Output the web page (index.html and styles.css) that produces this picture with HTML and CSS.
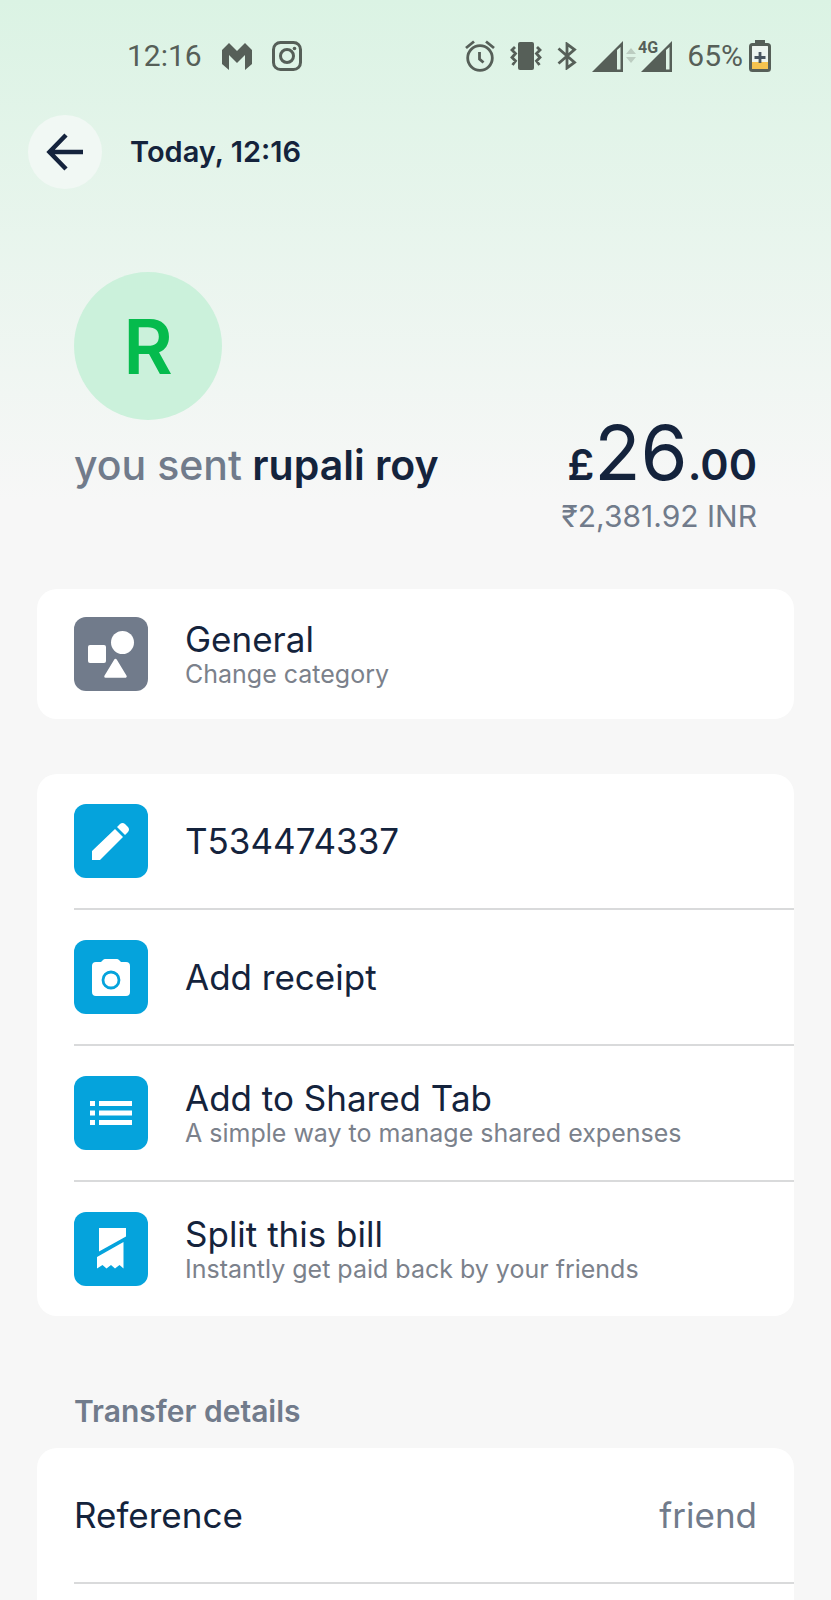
FILE: index.html
```html
<!DOCTYPE html>
<html lang="en">
<head>
<meta charset="utf-8">
<meta name="viewport" content="width=device-width, initial-scale=1">
<title>Transaction</title>
<link rel="stylesheet" href="styles.css">
</head>
<body>
<div class="screen">
  <div class="status">
    <span class="status-text">12:16</span>
    <svg class="status-mail" width="30" height="27" viewBox="0 0 30 27" aria-hidden="true"><path fill="#565f58" d="M7 0l8 8 8-8 7 7v14l-7 6V12l-8 8-8-8v15l-7-6V7z"/></svg>
    <svg width="30" height="30" viewBox="0 0 30 30" fill="none" stroke="#565f58" stroke-width="3" aria-hidden="true"><rect x="1.5" y="1.5" width="27" height="27" rx="7"/><circle cx="15" cy="15" r="6.5"/><circle cx="22.5" cy="7.5" r="1.8" fill="#565f58" stroke="none"/></svg>
    <div class="status-right">
      <svg width="30" height="32" viewBox="0 0 30 32" fill="none" stroke="#565f58" stroke-width="2.8" aria-hidden="true"><circle cx="15" cy="18" r="12.3"/><path d="M1 8l8-6.500M29 8l-8-6.500M14.500 12v7l4 3.500"/></svg>
      <svg width="32" height="28" viewBox="0 0 32 28" aria-hidden="true"><rect x="8" y="0" width="16" height="28" rx="2" fill="#565f58"/><path fill="none" stroke="#565f58" stroke-width="2.800" d="M5 5l-3 3 3.500 3.500-3.500 4 3.500 3.500-3 4M27 5l3 3-3.500 3.500 3.500 4-3.500 3.500 3 4"/></svg>
      <svg width="20" height="28" viewBox="0 0 20 28" fill="none" stroke="#565f58" stroke-width="2.800" aria-hidden="true"><path d="M1.500 6.500l16 14L10 26V2l7.500 5.500-16 14"/></svg>
      <svg width="80" height="34" viewBox="0 0 80 34" aria-hidden="true"><g fill="#565f58"><path fill-rule="evenodd" d="M31 2v31H0zM25 11v19.500h3.500V8z"/><path fill-rule="evenodd" d="M80 2v31H49zM74 11v19.500h3.500V8z"/></g><path fill="#bccdc1" d="M39 9l5 6H34zM34 18h10l-5 6z"/><text class="net" x="46" y="14">4G</text></svg>
      <span class="status-text">65%</span>
      <svg width="22" height="32" viewBox="0 0 22 32" aria-hidden="true"><path fill="#565f58" d="M6 0h10v4H6z"/><rect x="1.500" y="4.500" width="19" height="26" rx="2" fill="#eef6f0" stroke="#565f58" stroke-width="3"/><path fill="#f5c34f" d="M3 22h16v7H3z"/><path stroke="#4a5660" stroke-width="2.800" d="M11 12v11M5.500 17.500h11"/></svg>
    </div>
  </div>

  <header class="topbar">
    <button class="back" type="button" aria-label="Back">
      <svg width="38" height="38" viewBox="0 0 38 38" fill="none" stroke="#14233c" stroke-width="4.500" aria-hidden="true"><path d="M20 2L3.500 19 20 36M3.500 19H37"/></svg>
    </button>
    <h1 class="date">Today, 12:16</h1>
  </header>

  <section class="hero">
    <div class="avatar">R</div>
    <div class="summary">
      <h2 class="who"><span class="muted">you sent</span> rupali roy</h2>
      <div class="money">
        <div class="amount">£<span class="whole">26</span>.00</div>
        <div class="converted">₹2,381.92 INR</div>
      </div>
    </div>
  </section>

  <main class="content">
    <section class="card single">
      <button class="row" type="button">
        <svg class="icon grey" viewBox="0 0 74 74" fill="#fff" aria-hidden="true"><rect x="14" y="28" width="18" height="18" rx="2"/><circle cx="48.500" cy="25.500" r="11.500"/><path d="M41.500 43l10 16.500h-20z" stroke="#fff" stroke-width="2.500" stroke-linejoin="round"/></svg>
        <span class="label"><span class="title">General</span><span class="sub">Change category</span></span>
      </button>
    </section>

    <section class="card">
      <button class="row" type="button">
        <svg class="icon" viewBox="0 0 74 74" fill="#fff" aria-hidden="true"><path d="M18 56v-9l23-22 8 8-23 23zM43 23l3-3q2.500-2 5 0l3 3q2 2.500 0 5l-3 3z"/></svg>
        <span class="label"><span class="title">T534474337</span></span>
      </button>
      <button class="row" type="button">
        <svg class="icon" viewBox="0 0 74 74" fill="#fff" aria-hidden="true"><path d="M27 22l2-2q1-1 2-1h12q1 0 2 1l2 2h5q4 0 4 4v26q0 4-4 4H22q-4 0-4-4V26q0-4 4-4z"/><circle cx="37" cy="40" r="8" stroke="#05a3dc" stroke-width="2.800"/></svg>
        <span class="label"><span class="title">Add receipt</span></span>
      </button>
      <button class="row" type="button">
        <svg class="icon" viewBox="0 0 74 74" fill="#fff" aria-hidden="true"><path d="M16 25h5v5h-5zM25 25h33v5H25zM16 34.500h5v5h-5zM25 34.500h33v5H25zM16 44h5v5h-5zM25 44h33v5H25z"/></svg>
        <span class="label"><span class="title">Add to Shared Tab</span><span class="sub">A simple way to manage shared expenses</span></span>
      </button>
      <button class="row" type="button">
        <svg class="icon" viewBox="0 0 74 74" fill="#fff" aria-hidden="true"><path d="M25 16h27v8.500L25 39.500zM49.500 30v26.500L45.500 53l-4.500 3.500-4-3.500-4.500 3.500-4-3.500-5.500 3.500V45z"/></svg>
        <span class="label"><span class="title">Split this bill</span><span class="sub">Instantly get paid back by your friends</span></span>
      </button>
    </section>

    <h3 class="section-title">Transfer details</h3>
    <dl class="card details">
      <div class="detail"><dt>Reference</dt><dd>friend</dd></div>
    </dl>
  </main>
</div>
</body>
</html>
```

FILE: styles.css
```css
* {
  box-sizing: border-box;
}

body {
  margin: 0;
  background: #f7f7f7;
  color: #14233c;
  font-family: Inter, "Liberation Sans", sans-serif;
}

h1, h2, h3, dl, dd {
  margin: 0;
}

button {
  border: 0;
  padding: 0;
  color: inherit;
  font: inherit;
  text-align: left;
  cursor: pointer;
}

.screen {
  display: flex;
  flex-direction: column;
  min-height: 100vh;
  background: linear-gradient(#dbf3e4, #f7f7f7 500px);
}

.status {
  display: flex;
  align-items: center;
  height: 112px;
  padding: 0 60px 0 127px;
}

.status-text {
  color: #565f58;
  font: 30px/36px Roboto, sans-serif;
}

.status-mail {
  margin: 0 20px;
}

.status-right {
  display: flex;
  align-items: center;
  gap: 15px;
  margin-left: auto;
}

.status-right .status-text {
  margin-right: -9px;
}

.net {
  fill: #565f58;
  font: bold 16px Roboto, sans-serif;
}

.topbar {
  display: flex;
  align-items: center;
  gap: 28px;
  padding: 3px 28px 0;
}

.back {
  display: grid;
  place-items: center;
  width: 74px;
  height: 74px;
  border-radius: 50%;
  background: #f1f8f4;
}

.date {
  font-size: 29px;
  line-height: 36px;
  font-weight: 600;
}

.hero {
  padding: 83px 74px 53px;
}

.avatar {
  display: grid;
  place-items: center;
  width: 148px;
  height: 148px;
  border-radius: 50%;
  background: #cbf1db;
  color: #05bb4d;
  font-size: 76px;
  font-weight: 600;
}

.summary {
  display: flex;
  justify-content: space-between;
  align-items: baseline;
}

.who {
  font-size: 41px;
  line-height: 52px;
  font-weight: 600;
}

.muted {
  color: #717b8b;
  font-weight: 500;
}

.money {
  text-align: right;
}

.amount {
  font-size: 43px;
  line-height: 64px;
  font-weight: 600;
}

.whole {
  font-size: 76px;
  font-weight: 400;
}

.converted {
  color: #717b8b;
  font-size: 30px;
  line-height: 40px;
}

.content {
  display: flex;
  flex: 1;
  flex-direction: column;
  padding: 0 37px;
}

.card {
  margin-bottom: 55px;
  border-radius: 20px;
  background: #fff;
  overflow: hidden;
}

.row {
  display: flex;
  align-items: center;
  gap: 37px;
  width: calc(100% - 37px);
  margin-left: 37px;
  padding: 30px 0;
  background: none;
}

.single .row {
  padding: 28px 0;
}

.row + .row {
  border-top: 2px solid #d9dadb;
}

.icon {
  flex: none;
  width: 74px;
  height: 74px;
  border-radius: 12px;
  background: #05a3dc;
}

.grey {
  background: #717b8b;
}

.title, .sub {
  display: block;
}

.title {
  font-size: 35px;
  line-height: 40px;
}

.sub {
  color: #7b818b;
  font-size: 25px;
  line-height: 30px;
}

.section-title {
  margin: 20px 37px 17px;
  color: #717b8b;
  font-size: 30px;
  line-height: 40px;
  font-weight: 600;
}

.details {
  flex: 1;
  margin-bottom: 0;
  border-radius: 20px 20px 0 0;
}

.detail {
  display: flex;
  justify-content: space-between;
  margin-left: 37px;
  padding: 47px 37px 47px 0;
  border-bottom: 2px solid #d9dadb;
  font-size: 35px;
  line-height: 40px;
}

.detail dd {
  color: #717b8b;
}
```
